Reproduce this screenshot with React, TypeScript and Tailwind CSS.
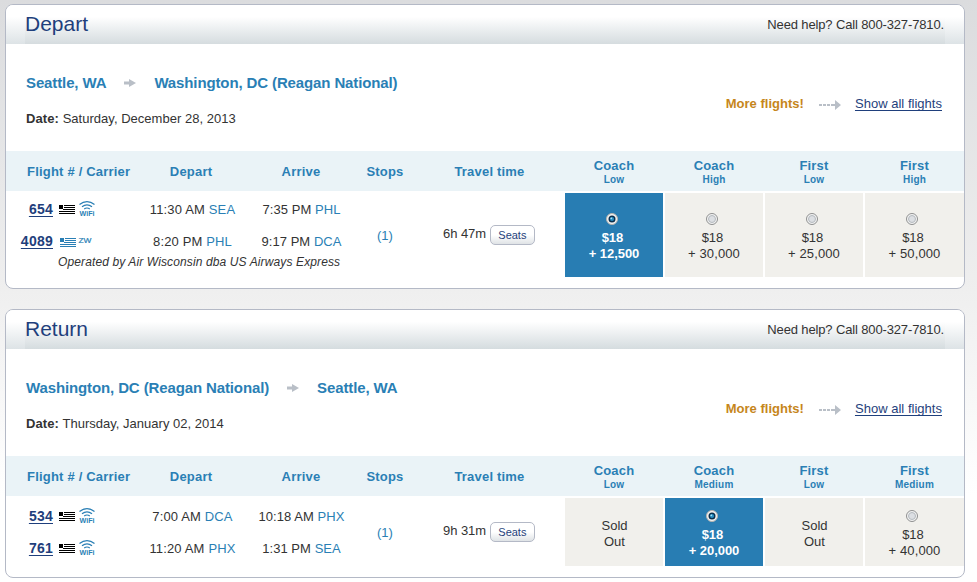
type Fare = {
  cabin: string;
  level: string;
  miles?: string;
  selected?: boolean;
};

type Leg = {
  number: string;
  express?: boolean;
  departs: string;
  from: string;
  arrives: string;
  to: string;
};

type Trip = {
  title: string;
  origin: string;
  destination: string;
  date: string;
  duration: string;
  operatedBy?: string;
  legs: Leg[];
  fares: Fare[];
};

const trips: Trip[] = [
  {
    title: "Depart",
    origin: "Seattle, WA",
    destination: "Washington, DC (Reagan National)",
    date: "Saturday, December 28, 2013",
    duration: "6h 47m",
    operatedBy: "Operated by Air Wisconsin dba US Airways Express",
    legs: [
      { number: "654", departs: "11:30 AM", from: "SEA", arrives: "7:35 PM", to: "PHL" },
      { number: "4089", express: true, departs: "8:20 PM", from: "PHL", arrives: "9:17 PM", to: "DCA" },
    ],
    fares: [
      { cabin: "Coach", level: "Low", miles: "12,500", selected: true },
      { cabin: "Coach", level: "High", miles: "30,000" },
      { cabin: "First", level: "Low", miles: "25,000" },
      { cabin: "First", level: "High", miles: "50,000" },
    ],
  },
  {
    title: "Return",
    origin: "Washington, DC (Reagan National)",
    destination: "Seattle, WA",
    date: "Thursday, January 02, 2014",
    duration: "9h 31m",
    legs: [
      { number: "534", departs: "7:00 AM", from: "DCA", arrives: "10:18 AM", to: "PHX" },
      { number: "761", departs: "11:20 AM", from: "PHX", arrives: "1:31 PM", to: "SEA" },
    ],
    fares: [
      { cabin: "Coach", level: "Low" },
      { cabin: "Coach", level: "Medium", miles: "20,000", selected: true },
      { cabin: "First", level: "Low" },
      { cabin: "First", level: "Medium", miles: "40,000" },
    ],
  },
];

const Flag = ({ className }: { className: string }) => (
  <svg width="16" height="9" viewBox="0 0 16 9" shapeRendering="crispEdges" fill="currentColor" className={className}>
    <path d="M0 0h4v4h-4zM5 0h11v1h-11zM5 2h11v1h-11zM4 4h12v1h-12zM0 6h16v1h-16zM0 8h16v1h-16z" />
  </svg>
);

const Wifi = () => (
  <svg width="17" height="16" viewBox="0 0 17 16" fill="none" stroke="#2a7fb5" className="shrink-0">
    <path
      d="M.5 3.500C3 1.500 5 .6 8 .6s5 .9 7.500 2.900M3 5.700C5 4.200 6.500 3.800 8 3.800s3 .4 5 1.900M5.200 8C6.300 7.200 7 7 8 7s1.700.2 2.800 1"
      strokeWidth="1.200"
    />
    <text
      x="0.500"
      y="15"
      fontSize="7.500"
      fontWeight="700"
      textLength="15"
      lengthAdjust="spacingAndGlyphs"
      letterSpacing="0"
      stroke="none"
      fill="#2a7fb5"
    >
      WiFi
    </text>
  </svg>
);

const RegionalTag = () => (
  <svg width="15" height="8" viewBox="0 0 15 8" className="ml-0.5">
    <text
      x="0.500"
      y="6"
      fontSize="7.500"
      textLength="13"
      lengthAdjust="spacingAndGlyphs"
      letterSpacing="0"
      fill="#2a7fb5"
      stroke="#2a7fb5"
      strokeWidth="0.200"
    >
      ZW
    </text>
  </svg>
);

const RouteArrow = () => (
  <svg width="12" height="8" viewBox="0 0 12 8" fill="#b9bfc7">
    <path d="M0 2.500h5V0l7 4-7 4V5.500H0z" />
  </svg>
);

const DashedArrow = () => (
  <svg width="22" height="10" viewBox="0 0 22 10" fill="#b9bfc7">
    <path d="M0 4h3v2H0zM4 4h3v2H4zM8 4h3v2H8zM12 4h4v2h-4zM16 0l6 5-6 5z" />
  </svg>
);

const Radio = ({ checked }: { checked?: boolean }) => (
  <svg width="12" height="12" viewBox="0 0 12 12">
    <circle cx="6" cy="6" r="5.500" fill="#f4f4f4" stroke={checked ? "#b5b3ae" : "#8e8f8f"} />
    {checked ? (
      <>
        <circle cx="6" cy="6" r="3.500" fill="#0b2f4c" />
        <circle cx="6" cy="6" r="2.100" fill="#2a8fc4" />
        <circle cx="5.300" cy="5.300" r="0.900" fill="#a8e4f8" />
      </>
    ) : (
      <circle cx="6" cy="6" r="3.500" fill="#dcdfe3" stroke="#b4b9be" />
    )}
  </svg>
);

const FareCell = ({ fare }: { fare: Fare }) => (
  <div
    className={`flex flex-col items-center justify-center pt-[3px] leading-4 ${
      fare.selected ? "bg-[#287db3] text-white" : "bg-[#f1f0ec]"
    }`}
  >
    {fare.miles ? (
      <>
        <div className="mr-[5px] h-[18px] pt-px">
          <Radio checked={fare.selected} />
        </div>
        <div className={fare.selected ? "mr-[3px] font-bold" : "mr-[3px]"}>$18</div>
        <div className={fare.selected ? "font-bold tracking-[-0.05px]" : "tracking-[0.1px]"}>+ {fare.miles}</div>
      </>
    ) : (
      <div className="ml-px text-center">
        Sold
        <br />
        Out
      </div>
    )}
  </div>
);

const FlightLeg = ({ leg }: { leg: Leg }) => (
  <div className="grid h-8 grid-cols-[130px_110px_110px] items-center">
    <div className="flex items-center">
      <div className="w-[47px] text-right">
        <a href="#" className="text-sm font-bold tracking-[0.25px] text-[#1f3f7c] underline underline-offset-2">
          {leg.number}
        </a>
      </div>
      <Flag className={leg.express ? "mt-0.5 ml-[7px] text-[#2a7fb5]" : "ml-1.5 text-black"} />
      {leg.express ? (
        <RegionalTag />
      ) : (
        <div className="ml-1">
          <Wifi />
        </div>
      )}
    </div>
    <div className="pt-px pl-[3px] text-center tracking-[0.15px]">
      {leg.departs} <span className="text-[#2a7fb5]">{leg.from}</span>
    </div>
    <div className="pt-px pl-px text-center tracking-[0.05px]">
      {leg.arrives} <span className="text-[#2a7fb5]">{leg.to}</span>
    </div>
  </div>
);

const TripCard = ({ trip }: { trip: Trip }) => (
  <section className="overflow-hidden rounded-lg border border-[#b4b9c6] bg-white">
    {/* title bar */}
    <header className="flex h-[39px] bg-linear-to-b from-white from-30% to-[#dde3e6]">
      <div className="ml-[19px] flex flex-1 items-center justify-between bg-linear-to-b from-white from-30% to-[#d5dcdf]">
        <h2 className="pb-0.5 text-[21px] tracking-normal text-[#1f3f7c]">{trip.title}</h2>
        <p className="pr-px tracking-[-0.14px]">Need help? Call 800-327-7810.</p>
      </div>
      <div className="w-[19px]" />
    </header>

    {/* route and date */}
    <div className="flex h-[107px] justify-between pr-[22px] pl-5">
      <div className="pt-[29px]">
        <div className="flex items-center gap-[18px] text-[15px] leading-5 font-bold tracking-[-0.12px] text-[#2a7fb5]">
          <span>{trip.origin}</span>
          <RouteArrow />
          <span>{trip.destination}</span>
        </div>
        <p className="mt-4 leading-5">
          <b className="tracking-[0.1px]">Date:</b> {trip.date}
        </p>
      </div>
      <div className="mt-[50px] flex h-5 items-center">
        <span className="font-bold tracking-[0.02px] text-[#c6861b]">More flights!</span>
        <span className="mr-3.5 ml-[15px] pt-0.5">
          <DashedArrow />
        </span>
        <a href="#" className="text-[#1f3f7c] underline underline-offset-2">
          Show all flights
        </a>
      </div>
    </div>

    {/* column titles */}
    <div className="grid h-10 grid-cols-[130px_110px_110px_58px_151px_399px] items-center bg-[#eaf3f7] pt-0.5 text-center font-bold tracking-[0.2px] text-[#2a7fb5]">
      <span className="pl-[21px] text-left whitespace-nowrap">Flight # / Carrier</span>
      <span>Depart</span>
      <span>Arrive</span>
      <span>Stops</span>
      <span>Travel time</span>
      <div className="grid grid-cols-[98px_98px_98px_99px] gap-0.5">
        {trip.fares.map((fare, i) => (
          <div key={i} className="leading-[15px]">
            {fare.cabin}
            <div className="text-[10px] leading-[14px]">{fare.level}</div>
          </div>
        ))}
      </div>
    </div>

    {/* flights and fares */}
    <div
      className={`mt-0.5 mb-[11px] grid grid-cols-[350px_58px_151px_399px] ${trip.operatedBy ? "h-[84px]" : "h-[68px]"}`}
    >
      <div className={trip.operatedBy ? "" : "pt-0.5"}>
        {trip.legs.map((leg) => (
          <FlightLeg key={leg.number} leg={leg} />
        ))}
        {trip.operatedBy && (
          <p className="-mt-[3px] pl-[52px] text-[12px] leading-4 tracking-[0.12px] whitespace-nowrap italic">
            {trip.operatedBy}
          </p>
        )}
      </div>
      <div className="flex items-center justify-center pt-0.5 text-[#2a7fb5]">(1)</div>
      <div className="flex items-center justify-center pr-px">
        <span className="mb-0.5 tracking-[-0.1px]">{trip.duration}</span>
        <button className="ml-1 h-5 w-[45px] rounded-[5px] border border-[#b4b9c6] bg-linear-to-b from-white from-50% to-[#dfe3e6] text-[11px] leading-4 tracking-normal text-[#1f3f7c]">
          Seats
        </button>
      </div>
      <div className="grid grid-cols-[98px_98px_98px_99px] gap-0.5">
        {trip.fares.map((fare, i) => (
          <FareCell key={i} fare={fare} />
        ))}
      </div>
    </div>
  </section>
);

const App = () => {
  return (
    <div className="flex h-[582px] flex-col gap-5 bg-linear-to-b from-[#dbdcde] via-[#efefef] via-50% to-white to-85% pt-1 pr-3 pl-[5px] font-['Liberation_Sans',Arial,sans-serif] text-[13px] tracking-[0.02px] text-[#333]">
      {trips.map((trip) => (
        <TripCard key={trip.title} trip={trip} />
      ))}
    </div>
  );
};

export default App;
